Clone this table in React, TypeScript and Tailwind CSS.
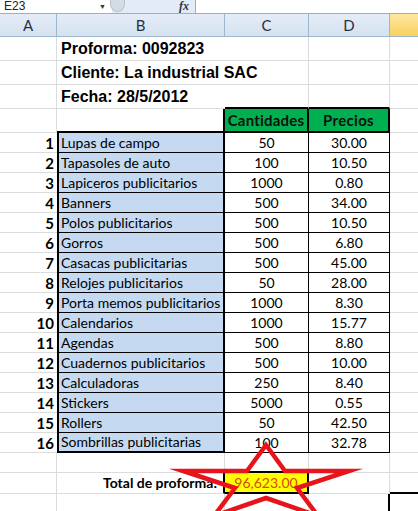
import React from 'react';

const items: [string, string, string][] = [
  ['Lupas de campo', '50', '30.00'],
  ['Tapasoles de auto', '100', '10.50'],
  ['Lapiceros publicitarios', '1000', '0.80'],
  ['Banners', '500', '34.00'],
  ['Polos publicitarios', '500', '10.50'],
  ['Gorros', '500', '6.80'],
  ['Casacas publicitarias', '500', '45.00'],
  ['Relojes publicitarios', '50', '28.00'],
  ['Porta memos publicitarios', '1000', '8.30'],
  ['Calendarios', '1000', '15.77'],
  ['Agendas', '500', '8.80'],
  ['Cuadernos publicitarios', '500', '10.00'],
  ['Calculadoras', '250', '8.40'],
  ['Stickers', '5000', '0.55'],
  ['Rollers', '50', '42.50'],
  ['Sombrillas publicitarias', '100', '32.78'],
];

const grid = 'border-[#dadcdd]';

const App: React.FC = () => {
  return (
    <div className="relative w-[418px] h-[511px] overflow-hidden bg-white text-black font-['Lato',sans-serif]">
      {/* formula bar */}
      <div className="flex h-[14px] border-b border-[#a5acb5] overflow-hidden">
        <div className="w-[112px] flex items-start bg-white">
          <span className="ml-[4px] text-[12px] leading-[13px] text-[#222] font-['Liberation_Sans',sans-serif]">E23</span>
          <span className="ml-auto mr-[6px] mt-[3px] text-[7px] leading-[7px] text-[#333]">▼</span>
        </div>
        <div className="w-[84px] flex items-start bg-[#e3ebf6] border-r border-[#a5acb5]">
          <div className="w-[15px] h-[12px] -ml-[2px] rounded-b-full bg-[#d5dbe3] border border-t-0 border-[#b9c1cc]" />
          <span className="ml-auto mr-[6px] italic font-bold text-[12px] leading-[13px] font-['Liberation_Serif',serif] text-[#333]">fx</span>
        </div>
        <div className="flex-1 bg-white" />
      </div>

      {/* column headers */}
      <div className="flex h-[23px] border-b border-[#9eb6ce] text-[15px] text-[#27313d] bg-gradient-to-b from-[#e4ecf7] to-[#d6e2f1]">
        <div className="w-[57px] flex items-center justify-center border-r border-[#9eb6ce]">A</div>
        <div className="w-[168px] flex items-center justify-center border-r border-[#9eb6ce]">B</div>
        <div className="w-[84px] flex items-center justify-center border-r border-[#9eb6ce]">C</div>
        <div className="w-[81px] flex items-center justify-center border-r border-[#9eb6ce]">D</div>
        <div className="flex-1 bg-gradient-to-b from-[#fde7a0] to-[#f8d15a]" />
      </div>

      {/* title rows */}
      {['Proforma: 0092823', 'Cliente: La industrial SAC', 'Fecha: 28/5/2012'].map((t, i) => (
        <div key={t} className="flex h-[24px]">
          <div className={`w-[57px] border-r border-b ${grid}`} />
          <div className={`w-[168px] relative border-b ${grid}`}>
            <span className="absolute left-[4px] top-[2px] whitespace-nowrap text-[16px] leading-[20px] font-bold font-['Liberation_Sans',sans-serif]">{t}</span>
          </div>
          <div className={`w-[84px] border-r ${grid} ${i === 2 ? 'border-b-2 border-b-black' : 'border-b'}`} />
          <div className={`w-[81px] border-r ${grid} ${i === 2 ? 'border-b-2 border-b-black' : 'border-b'}`} />
          <div className={`flex-1 border-b ${grid}`} />
        </div>
      ))}

      {/* table header */}
      <div className="flex h-[24px] font-bold text-[15px]">
        <div className={`w-[57px] border-r border-b ${grid}`} />
        <div className="w-[168px] border-r-2 border-b-2 border-black" />
        <div className="w-[84px] flex items-center justify-center bg-[#00b050] border-r-2 border-b-2 border-black text-[#111] tracking-[0.2px]">Cantidades</div>
        <div className="w-[81px] flex items-center justify-center bg-[#00b050] border-r-2 border-b-2 border-black text-[#111] tracking-[0.3px]">Precios</div>
        <div className={`flex-1 border-b ${grid}`} />
      </div>

      {/* data rows */}
      {items.map(([name, qty, price], i) => {
        const last = i === items.length - 1;
        return (
          <div key={name} className="flex h-[20px] text-[14px] leading-[18px]">
            <div className={`w-[57px] flex items-center justify-end pr-[3px] font-bold text-[15px] border-b ${grid}`}>
              <span>{i + 1}</span>
            </div>
            <div className={`w-[168px] flex items-center pl-[2px] bg-[#c5d9f1] border-l-2 border-r-2 border-black whitespace-nowrap ${last ? 'border-b-2' : 'border-b'}`}>
              {name}
            </div>
            <div className="w-[84px] flex items-center justify-center border-r border-b border-black">{qty}</div>
            <div className="w-[81px] flex items-center justify-center border-r border-b border-black">{price}</div>
            <div className={`flex-1 border-b ${grid}`} />
          </div>
        );
      })}

      {/* empty row */}
      <div className="flex h-[20px]">
        <div className={`w-[57px] border-r border-b ${grid}`} />
        <div className={`w-[168px] border-r border-b ${grid}`} />
        <div className="w-[84px] border-r border-[#dadcdd] border-b-2 border-b-black" />
        <div className={`w-[81px] border-r border-b ${grid}`} />
        <div className={`flex-1 border-b ${grid}`} />
      </div>

      {/* total row */}
      <div className="flex h-[21px] text-[15px] leading-[18px]">
        <div className={`w-[57px] border-r border-b ${grid}`} />
        <div className="w-[168px] flex items-center justify-end pr-[6px] font-bold text-[14px] border-r-2 border-black border-b border-b-[#dadcdd] whitespace-nowrap">
          Total de proforma:
        </div>
        <div className="w-[84px] flex items-center justify-center bg-[#ffff00] border-r-2 border-b-2 border-black text-[14px] text-[#d9480f]">96,623.00</div>
        <div className={`w-[81px] border-r border-b ${grid}`} />
        <div className="flex-1 border-b-2 border-black" />
      </div>

      {/* row 23 */}
      <div className="flex h-[20px]">
        <div className={`w-[57px] border-r ${grid}`} />
        <div className={`w-[168px] border-r ${grid}`} />
        <div className={`w-[84px] border-r ${grid}`} />
        <div className="w-[81px] border-r-2 border-black" />
        <div className="flex-1" />
      </div>

      {/* hand-drawn star */}
      <svg className="absolute inset-0 pointer-events-none" width="418" height="511" viewBox="0 0 418 511">
        <polygon
          points="266,445 285,471 349,471 297,488 318,516 266,498 214,516 235,488 183,471 247,471"
          fill="none"
          stroke="#e8141c"
          strokeWidth="4.5"
          strokeLinejoin="miter"
          strokeMiterlimit="10"
        />
      </svg>
    </div>
  );
};

export default App;
